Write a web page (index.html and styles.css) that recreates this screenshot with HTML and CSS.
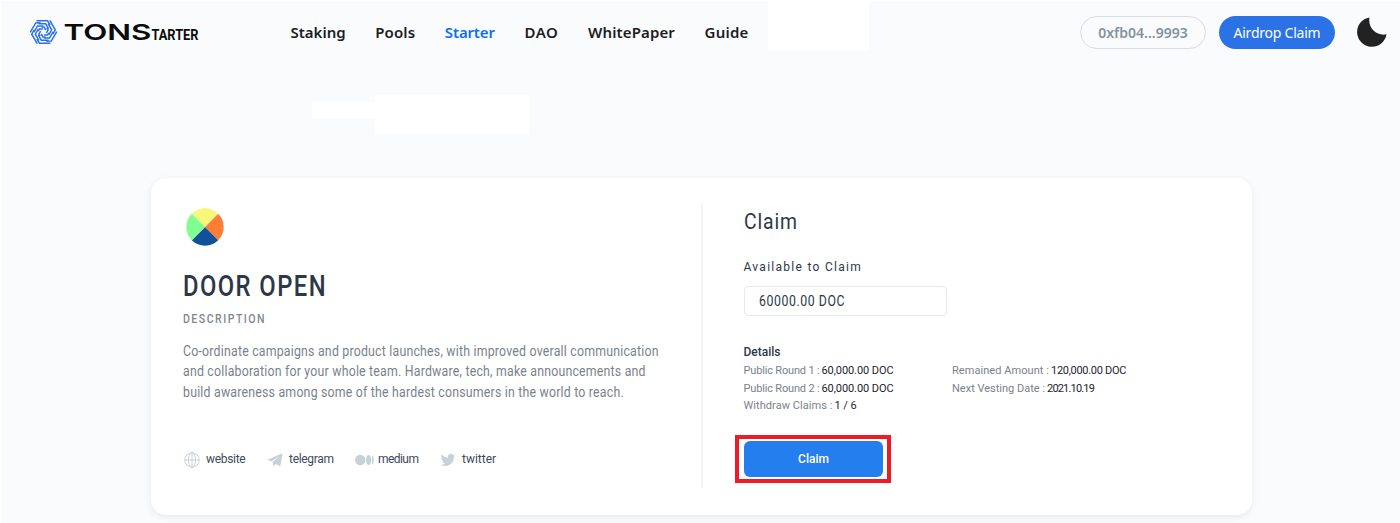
FILE: index.html
```html
<!DOCTYPE html>
<html lang="en">
<head>
<meta charset="utf-8">
<title>TONStarter</title>
<link rel="stylesheet" href="styles.css">
</head>
<body>
<header class="topbar">
  <a class="logo">
    <svg width="180" height="28" viewBox="0 0 180 28">
      <g fill="none" stroke="#2a72e5" stroke-width="1.500">
        <g id="arm"><path d="M6.500 2.700H17.500L20 7"/><path d="M8.500 5.800H15.700L18.600 10.800"/><path d="M11.500 9H14L15.800 12"/></g>
        <use href="#arm" transform="rotate(60 13.5 14)"/><use href="#arm" transform="rotate(120 13.5 14)"/><use href="#arm" transform="rotate(180 13.5 14)"/><use href="#arm" transform="rotate(240 13.5 14)"/><use href="#arm" transform="rotate(300 13.5 14)"/>
      </g>
      <text class="logo-a" x="33.500" y="22" textLength="88" lengthAdjust="spacingAndGlyphs">TONS</text>
      <text class="logo-b" x="121.500" y="22" textLength="47" lengthAdjust="spacingAndGlyphs">TARTER</text>
    </svg>
  </a>
  <nav class="nav">
    <a>Staking</a><a class="pools">Pools</a><a class="active">Starter</a><a class="dao">DAO</a><a class="paper">WhitePaper</a><a class="guide">Guide</a>
  </nav>
  <div class="actions">
    <span class="wallet">0xfb04...9993</span>
    <span class="airdrop">Airdrop Claim</span>
    <svg class="moon" width="30" height="30" viewBox="0 0 30 30"><path fill="#222" d="M12.500 .4A14.800 14.800 0 1 0 29.500 17.300C20 19.500 10.500 11 12.500 .4Z"/></svg>
  </div>
</header>
<div class="patch patch-nav"></div><div class="patch patch-small"></div><div class="patch patch-large"></div>
<main class="card">
  <section class="about">
    <svg class="token" width="38" height="38" viewBox="-19 -19 38 38"><g><path fill="#f7f77a" d="M0 0L-13.200-13.200A18.700 18.700 0 0 1 13.200-13.200Z"/><path fill="#ff7e36" d="M0 0L13.200-13.200A18.700 18.700 0 0 1 13.200 13.200Z"/><path fill="#11509b" d="M0 0L13.200 13.200A18.700 18.700 0 0 1-13.200 13.200Z"/><path fill="#80ff90" d="M0 0L-13.200 13.200A18.700 18.700 0 0 1-13.200-13.200Z"/></g></svg>
    <h1>DOOR OPEN</h1>
    <h2>DESCRIPTION</h2>
    <p>Co-ordinate campaigns and product launches, with improved overall communication<br>and collaboration for your whole team. Hardware, tech, make announcements and<br>build awareness among some of the hardest consumers in the world to reach.</p>
    <div class="links">
      <a><svg width="16" height="16" viewBox="0 0 16 16" fill="none" stroke="#c7d1d8"><circle cx="8" cy="8" r="7.200"/><ellipse cx="8" cy="8" rx="3.500" ry="7.200"/><path d="M.8 8H15.200M8 .8V15.200"/></svg>website</a>
      <a><svg width="16" height="16" viewBox="0 0 16 16" fill="#c7d1d8"><path d="M.3 7.800L15.500 1.300L13.300 14.300L8.500 12L6.500 14.300L5.500 10.200L12.800 3.900L4.500 9.500Z"/></svg>telegram</a>
      <a class="medium"><svg width="19" height="16" viewBox="0 0 19 16" fill="#c7d1d8"><circle cx="5.200" cy="8" r="5.200"/><ellipse cx="13.600" cy="8" rx="2.500" ry="5"/><ellipse cx="17.700" cy="8" rx=".9" ry="4.500"/></svg>medium</a>
      <a class="twitter"><svg width="16" height="16" viewBox="0 0 24 24" fill="#c7d1d8"><path d="M23 5.100a9 9 0 0 1-2.600.7 4.500 4.500 0 0 0 2-2.500 9 9 0 0 1-2.900 1.100A4.500 4.500 0 0 0 11.800 8.600 12.900 12.900 0 0 1 2.500 3.900a4.500 4.500 0 0 0 1.400 6 4.500 4.500 0 0 1-2.100-.6 4.500 4.500 0 0 0 3.700 4.600 4.500 4.500 0 0 1-2.100.1 4.500 4.500 0 0 0 4.300 3.100A9.200 9.200 0 0 1 1 19a12.900 12.900 0 0 0 19.800-11.500A9 9 0 0 0 23 5.100Z"/></svg>twitter</a>
    </div>
  </section>
  <section class="claim">
    <h3>Claim</h3>
    <div class="label">Available to Claim</div>
    <div class="field"><span>60000.00 DOC</span></div>
    <div class="details-title">Details</div>
    <div class="details">
      <div>
        <div class="row"><span class="round">Public Round 1 :</span><b>60,000.00 DOC</b></div>
        <div class="row"><span class="round">Public Round 2 :</span><b>60,000.00 DOC</b></div>
        <div class="row"><span>Withdraw Claims :</span><b>1 / 6</b></div>
      </div>
      <div>
        <div class="row"><span>Remained Amount :</span><b class="amount">120,000.00 DOC</b></div>
        <div class="row"><span class="vesting">Next Vesting Date :</span><b class="date">2021.10.19</b></div>
      </div>
    </div>
    <div class="highlight"><button>Claim</button></div>
  </section>
</main>
</body>
</html>
```
FILE: styles.css
```css
* { box-sizing: border-box; }
body { margin: 0; height: 523px; overflow: hidden; background: #fafbfd; border-top: 1px solid #fff; border-left: 1px solid #fff; font-family: Roboto, sans-serif; color: #2d3748; position: relative; }
.topbar { display: flex; align-items: center; height: 62px; padding: 0 13px 0 29px; }
.logo, .logo svg { display: block; }
.logo-a { font: 600 22px Inter, sans-serif; fill: #0b0b0b; }
.logo-b { font: 700 15px Roboto, sans-serif; fill: #0b0b0b; }
.nav { display: flex; gap: 29.600px; margin-left: 80.500px; font: 600 15px/24px "Noto Sans", sans-serif; color: #1d1d1f; white-space: nowrap; }
.nav .pools { letter-spacing: .122px; }
.nav .active { color: #0f6ff2; letter-spacing: -.145px; }
.nav .dao { letter-spacing: .578px; }
.nav .paper { letter-spacing: .134px; }
.nav .guide { letter-spacing: .225px; }
.actions { display: flex; align-items: center; margin-left: auto; white-space: nowrap; }
.wallet, .airdrop { display: flex; align-items: center; justify-content: center; height: 33px; border-radius: 17px; font: 600 14px "Noto Sans", sans-serif; }
.wallet { width: 126px; border: 1px solid #d9dce1; color: #86929d; }
.airdrop { width: 116px; margin-left: 13px; background: #2a72e5; color: #fff; font-weight: 400; letter-spacing: -.225px; }
.moon { margin-left: 22px; }
.patch { position: absolute; background: #fff; }
.patch-nav { left: 767px; top: -1px; width: 101px; height: 50px; }
.patch-small { left: 311px; top: 101px; width: 63px; height: 17px; }
.patch-large { left: 374px; top: 94px; width: 154px; height: 39px; }
.card { display: flex; width: 1101px; height: 337px; margin: 115px 0 0 150px; padding: 25px 0; border-radius: 15px; background: #fff; box-shadow: 0 2px 6px rgba(60, 70, 90, .1); }
.about { width: 552px; height: 285px; padding: 5px 0 0 32px; border-right: 2px solid #f4f5f8; white-space: nowrap; }
.token { display: block; margin-left: 3px; }
h1, h2, h3, p { margin: 0; transform-origin: left; }
h1 { margin-top: 21.500px; font-size: 29px; font-weight: 500; line-height: 36px; letter-spacing: 1.755px; transform: scaleX(.82); }
h2 { margin-top: 5.500px; font-size: 12px; font-weight: 500; line-height: 20px; letter-spacing: 1.681px; color: #808992; transform: scaleX(.88); }
p { margin-top: 11.500px; font-size: 14px; line-height: 20.700px; letter-spacing: .24px; color: #78828c; transform: scaleX(.88); }
.links { display: flex; margin-top: 49.500px; font-size: 12px; line-height: 15px; letter-spacing: -.3px; color: #3d495d; }
.links a { display: flex; width: 83px; padding-left: 1px; gap: 6px; }
.links svg { flex: none; }
.links a:nth-child(2) { width: 87px; }
.links .medium { width: 86px; padding-left: 2px; gap: 4px; letter-spacing: -.55px; }
.links .twitter { letter-spacing: 0; }
.claim { padding: 3.500px 0 0 40.500px; white-space: nowrap; }
h3 { font-size: 22px; font-weight: 400; line-height: 30px; letter-spacing: 1px; transform: scaleX(.88); }
.label { margin-top: 20px; font-size: 12px; line-height: 20px; letter-spacing: 1.28px; }
.field { width: 203px; height: 30px; margin-top: 9.500px; padding-left: 14px; border: 1px solid #e5e9f3; border-radius: 4px; font-size: 14px; line-height: 28px; letter-spacing: .63px; }
.field span { display: inline-block; transform: scaleX(.88); transform-origin: left; }
.details-title { margin-top: 26px; font-size: 12px; font-weight: 500; line-height: 20px; }
.details { display: flex; font-size: 11px; line-height: 17.500px; color: #78828c; }
.details > div { width: 208.500px; }
.row { display: flex; gap: 2px; letter-spacing: .06px; }
.row b { font-weight: 400; color: #24242c; letter-spacing: -.078px; }
.row .round { letter-spacing: -.17px; }
.row .vesting { letter-spacing: 0; }
.row .amount { letter-spacing: -.3px; }
.row .date { letter-spacing: -.827px; }
.highlight { width: 156px; height: 48px; margin: 20px 0 0 -8.500px; padding: 2px 5px; border: 4px solid #ed1c24; }
button { display: block; width: 139px; height: 36px; padding: 0; border: 0; border-radius: 6px; background: #257eee; color: #fff; font: 500 12px Roboto, sans-serif; }
```
